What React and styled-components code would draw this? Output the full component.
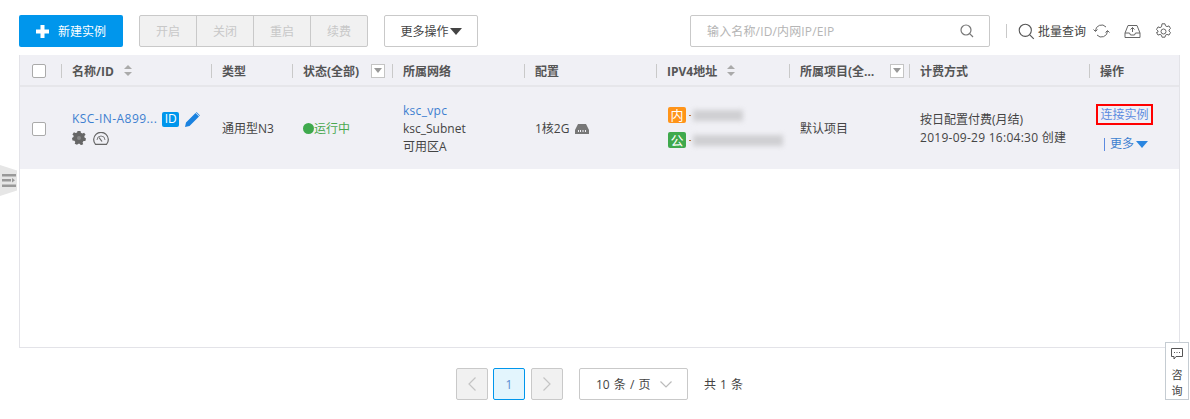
import React from "react";
import styled, { createGlobalStyle } from "styled-components";

const Global = createGlobalStyle`
  html, body { margin: 0; padding: 0; background: #fff; }
  body { font-family: "Open Sans", "Noto Sans CJK SC", sans-serif; font-size: 12px; color: #444; }
  * { box-sizing: border-box; }
`;
const Page = styled.div`position: relative; width: 1190px; height: 419px; overflow: hidden; padding: 15px 0 0 19px;`;
const Toolbar = styled.div`display: flex; align-items: center; height: 32px; width: 1160px;`;
const PrimaryButton = styled.button`
  display: flex; align-items: center; justify-content: center; gap: 9px; width: 104px; height: 32px; padding: 0;
  border: 0; border-radius: 2px; background: #0096ec; color: #fff; font: inherit;
`;
const Group = styled.div`display: flex; margin-left: 16px;`;
const GroupButton = styled.button`
  width: 58px; height: 32px; padding: 0; margin-left: ${p => (p.$first ? 0 : "-1px")}; border: 1px solid #c9c9c9; background: #f1f1f1;
  color: #c8c8c8; font: inherit; border-radius: ${p => (p.$first ? "2px 0 0 2px" : p.$last ? "0 2px 2px 0" : 0)};
`;
const MoreButton = styled.button`
  display: flex; align-items: center; justify-content: center; gap: 1px; width: 94px; height: 32px; margin-left: 16px; padding: 0;
  border: 1px solid #c9c9c9; border-radius: 2px; background: #fff; color: #444; font: inherit;
`;
const Search = styled.div`
  display: flex; align-items: center; justify-content: space-between; width: 300px; height: 32px; margin-left: auto; padding: 0 15px 0 16px;
  border: 1px solid #c9c9c9; border-radius: 2px; color: #b5b5b5; letter-spacing: .15px;
`;
const Divider = styled.span`width: 1px; height: 14px; margin: 0 11px 0 16px; background: #c9c9c9;`;
const Batch = styled.div`display: flex; align-items: center; gap: 3px; color: #444;`;
const ToolIcons = styled.div`display: flex; align-items: center; gap: 14px; margin: 0 7px 0 7px;`;
const Table = styled.div`width: 1161px; height: 293px; margin-top: 8px; border: 1px solid #e3e3e8; border-top: 0;`;
const columns = "42px 150px 81px 100px 132px 132px 133px 120px 180px 89px";
const Header = styled.div`display: grid; grid-template-columns: ${columns}; height: 32px; padding-top: 1px; align-items: center; background: #f0f0f5; border-bottom: 2px solid #e6e6ea; font-weight: 700; color: #555;`;
const HeadCell = styled.div`
  display: flex; align-items: center; justify-content: space-between; height: 14px; margin-left: -1px; padding: 0 ${p => p.$right ?? 10}px 0 10px;
  border-left: 1px solid #c9c9c9;
`;
const HeadText = styled.span`display: flex; align-items: center; gap: 10px; white-space: nowrap;`;
const CheckCell = styled.div`display: flex; padding-left: 12px;`;
const Checkbox = styled.span`display: block; width: 14px; height: 14px; background: #fff; border: 1px solid #aaa; border-radius: 2px;`;
const FilterBox = styled.span`display: flex; align-items: center; justify-content: center; width: 14px; height: 14px; background: #fff; border: 1px solid #c4c4c4;`;
const Row = styled.div`display: grid; grid-template-columns: ${columns}; height: 82px; padding-top: 1px; align-items: center; background: #f0f0f5; color: #444;`;
const Cell = styled.div`padding-left: ${p => p.$pad ?? 10}px; margin-top: ${p => p.$top ?? 0}px; line-height: 18px; white-space: nowrap;`;
const Link = styled.span`color: #3d7fd0; letter-spacing: ${p => p.$track ?? 0}px;`;
const NameLine = styled.div`display: flex; align-items: center; height: 18px;`;
const IdTag = styled.span`display: flex; align-items: center; justify-content: center; width: 17px; height: 15px; margin: 0 6px 0 5px; border-radius: 2px; background: #0096ec; color: #fff; font-size: 12px;`;
const NameIcons = styled.div`display: flex; align-items: center; gap: 7px; margin-top: 3px;`;
const Status = styled.div`display: flex; align-items: center; color: #4aa84f;`;
const Dot = styled.span`width: 11px; height: 11px; border-radius: 50%; background: #3fa94d;`;
const Config = styled.div`display: flex; align-items: center; gap: 6px;`;
const IpList = styled.div`display: flex; flex-direction: column; gap: 9px;`;
const IpLine = styled.div`display: flex; align-items: center;`;
const IpTag = styled.span`display: flex; align-items: center; justify-content: center; width: 18px; height: 16px; border-radius: 2px; color: #fff; font-size: 13px; background: ${p => p.$bg};`;
const IpTick = styled.span`width: 2px; height: 1px; margin: 0 2px 0 3px; background: #b5652c;`;
const Blurred = styled.span`display: block; height: 11px; width: ${p => p.$w}px; background: #cfcfd2; filter: blur(2.5px);`;
const DateLine = styled.div`letter-spacing: .27px;`;
const Ops = styled.div`display: flex; flex-direction: column; align-items: flex-start; padding-left: 5px;`;
const ConnectLink = styled.span`width: 57px; height: 21px; text-align: center; line-height: 17px; border: 2px solid #f00; color: #5c8be0;`;
const OpMore = styled.div`display: flex; align-items: center; gap: 2px; margin: 10px 0 0 8px; color: #3d7fd0;`;
const OpBar = styled.span`width: 1px; height: 13px; margin-right: 3px; background: #5c8be0;`;
const Pager = styled.div`display: flex; align-items: center; height: 32px; margin-top: 20px; padding-left: 437px;`;
const PageBtn = styled.span`
  display: flex; align-items: center; justify-content: center; width: 32px; height: 32px; margin-right: ${p => p.$mr ?? 5}px; border-radius: 2px;
  border: 1px solid ${p => (p.$active ? "#0096ec" : "#c9c9c9")}; background: ${p => (p.$active ? "#e3f5fd" : "#f1f1f1")}; color: #5b8bd0;
`;
const PageSize = styled.div`
  display: flex; align-items: center; justify-content: space-between; width: 109px; height: 32px; margin: 0 16px 0 11px; padding: 0 15px 0 16px;
  border: 1px solid #c9c9c9; border-radius: 2px; word-spacing: 1px;
`;
const Total = styled.span`word-spacing: 1px;`;
const Consult = styled.div`
  position: absolute; left: 1165px; top: 342px; width: 24px; height: 58px; padding-top: 5px; background: #fff; border: 1px solid #c5ccd2;
  display: flex; flex-direction: column; align-items: center; font-size: 11px; line-height: 16px; color: #444;
`;
const ConsultText = styled.span`margin-top: 7px; width: 12px; text-align: center;`;
const Collapse = styled.div`
  position: absolute; left: 0; top: 165px; width: 17px; height: 31px; display: flex; align-items: center; justify-content: center;
  background: #e6e6e6; clip-path: polygon(0 0, 100% 18%, 100% 82%, 0 100%);
`;

const Caret = ({ c = "#444", w = 12, h = 7 }) => (
  <svg width={w} height={h} viewBox="0 0 12 7"><path d="M0 0h12L6 7z" fill={c} /></svg>
);
const Sort = () => (
  <svg width="8" height="11" viewBox="0 0 8 11"><path d="M4 0l4 4H0zM4 11L0 7h8z" fill="#aaa" /></svg>
);
const Filter = () => <FilterBox><svg width="8" height="5" viewBox="0 0 8 5"><path d="M0 0h8L4 5z" fill="#999" /></svg></FilterBox>;
const Mag = ({ s = 14, c = "#777", sw = 1.2 }) => (
  <svg width={s} height={s} viewBox="0 0 14 14" fill="none" stroke={c} strokeWidth={sw}><circle cx="6" cy="6" r="5" /><path d="M9.7 9.7L13 13" /></svg>
);
const Plus = () => <svg width="13" height="13" viewBox="0 0 13 13"><path d="M4.5 0h4v4.5H13v4H8.500V13h-4V8.500H0v-4h4.500z" fill="#fff" /></svg>;
const Refresh = () => (
  <svg width="17" height="16" viewBox="0 0 17 16" fill="none" stroke="#666" strokeWidth="1"><path d="M2.500 8a6 6 0 0 1 10.500-4" /><path d="M14.500 8a6 6 0 0 1-10.500 4" /><path d="M0.500 6.500l2 2 2-2M12.500 9.500l2-2 2 2" /></svg>
);
const Cloud = () => (
  <svg width="17" height="15" viewBox="0 0 17 15" fill="none" stroke="#666" strokeWidth="1"><path d="M1 9l3-7.500h9L16 9v4.500H1zM1 9h4.500l1 2h4l1-2H16" /><path d="M8.500 8V3.500M6.500 5.500l2-2 2 2" /></svg>
);
const Gear = () => (
  <svg width="17" height="17" viewBox="0 0 17 17" fill="none" stroke="#666" strokeWidth="1"><circle cx="8.500" cy="8.500" r="2.500" /><path d="M7 .8h3l.5 2 1.500.8 2-.7 1.500 2.600-1.500 1.400v1.200l1.500 1.400-1.500 2.600-2-.7-1.500.8-.5 2H7l-.5-2-1.500-.8-2 .7-1.500-2.600L3 9.100V7.900L1.500 6.500 3 3.900l2 .7 1.500-.8z" /></svg>
);
const Pencil = () => <svg width="15" height="15" viewBox="0 0 15 15"><path d="M0 15l1-4.500L10.500 1l3.500 3.500L4.500 14zM11.500 0l3.500 3.500-.5.500L11 .5z" fill="#1a82e0" /></svg>;
const SolidGear = () => (
  <svg width="14" height="14" viewBox="0 0 14 14"><path d="M5.500 0h3l.4 1.800 1.500.7 1.700-.8 1.500 2.100-1.300 1.300.2 1.400 1.500.9-.6 2.500-1.900.2-.9 1.300.6 1.800-2.300 1-1.200-1.400H6.300L5 13.800l-2.300-1 .6-1.800-.9-1.300-1.900-.2L0 7l1.500-.9.200-1.400L.4 3.400l1.500-2.100 1.700.8 1.500-.7z" fill="#666" /><circle cx="7" cy="7" r="2" fill="#888" /></svg>
);
const GaugeIcon = () => (
  <svg width="16" height="13" viewBox="0 0 16 13" fill="none" stroke="#666" strokeWidth="1.200"><path d="M2.500 12.400A7.300 7.300 0 1 1 13.500 12.400z" /><path d="M4 8a4 4 0 0 1 8 0" strokeWidth=".8" /><path d="M6 5.500l3 4" /></svg>
);
const Nic = () => <svg width="14" height="11" viewBox="0 0 14 11"><path d="M3 0h8l3 6v4H0V6z" fill="#777" /><path d="M3 6h1v2H3zM5 6h1v2H5zM7.500 6h1v2h-1zM10 6h1v2h-1z" fill="#f0f0f5" /></svg>;
const Chevron = ({ d = "down", c = "#bbb" }) => (
  <svg width={d === "down" ? 12 : 8} height={d === "down" ? 7 : 14} viewBox={d === "down" ? "0 0 12 7" : "0 0 8 14"} fill="none" stroke={c} strokeWidth="1.200">
    <path d={d === "down" ? "M.5.500L6 6 11.500.500" : d === "left" ? "M7.500.500L1 7l6.500 6.500" : "M.5.500L7 7 .5 13.500"} />
  </svg>
);
const Chat = () => <svg width="12" height="12" viewBox="0 0 12 12" fill="none" stroke="#555"><path d="M.5.500h11v8H5l-2 2.500V8.500H.5z" /><path d="M3 4.500h6" strokeDasharray="1 1.500" /></svg>;
const CollapseIcon = () => <svg width="14" height="13" viewBox="0 0 14 13"><path d="M0 0h14v2.500H0zM0 5h9v2.500H0zM10 4l3 2.300-3 2.300zM0 10.500h14V13H0z" fill="#999" /></svg>;

export default function App() {
  return (
    <Page>
      <Global />
      <Toolbar>
        <PrimaryButton><Plus />新建实例</PrimaryButton>
        <Group>
          <GroupButton $first>开启</GroupButton>
          <GroupButton>关闭</GroupButton>
          <GroupButton>重启</GroupButton>
          <GroupButton $last>续费</GroupButton>
        </Group>
        <MoreButton>更多操作<Caret /></MoreButton>
        <Search>输入名称/ID/内网IP/EIP<Mag /></Search>
        <Divider />
        <Batch><Mag s={17} c="#555" sw={0.9} />批量查询</Batch>
        <ToolIcons><Refresh /><Cloud /><Gear /></ToolIcons>
      </Toolbar>
      <Table>
        <Header>
          <CheckCell><Checkbox /></CheckCell>
          <HeadCell><HeadText>名称/ID<Sort /></HeadText></HeadCell>
          <HeadCell><HeadText>类型</HeadText></HeadCell>
          <HeadCell $right={8}><HeadText>状态(全部)</HeadText><Filter /></HeadCell>
          <HeadCell><HeadText>所属网络</HeadText></HeadCell>
          <HeadCell><HeadText>配置</HeadText></HeadCell>
          <HeadCell><HeadText>IPV4地址<Sort /></HeadText></HeadCell>
          <HeadCell $right={6}><HeadText>所属项目(全…</HeadText><Filter /></HeadCell>
          <HeadCell><HeadText>计费方式</HeadText></HeadCell>
          <HeadCell><HeadText>操作</HeadText></HeadCell>
        </Header>
        <Row>
          <CheckCell><Checkbox /></CheckCell>
          <Cell $top={-2}>
            <NameLine><Link $track={0.43}>KSC-IN-A899...</Link><IdTag>ID</IdTag><Pencil /></NameLine>
            <NameIcons><SolidGear /><GaugeIcon /></NameIcons>
          </Cell>
          <Cell>通用型N3</Cell>
          <Cell><Status><Dot />运行中</Status></Cell>
          <Cell><div><Link $track={0.3}>ksc_vpc</Link></div><div>ksc_Subnet</div><div>可用区A</div></Cell>
          <Cell $top={1}><Config>1核2G<Nic /></Config></Cell>
          <Cell $pad={11} $top={-2}>
            <IpList>
              <IpLine><IpTag $bg="#ff9419">内</IpTag><IpTick /><Blurred $w={50} /></IpLine>
              <IpLine><IpTag $bg="#3fa94d">公</IpTag><IpTick /><Blurred $w={90} /></IpLine>
            </IpList>
          </Cell>
          <Cell>默认项目</Cell>
          <Cell $top={1}><div>按日配置付费(月结)</div><DateLine>2019-09-29 16:04:30 创建</DateLine></Cell>
          <Cell $pad={1}>
            <Ops>
              <ConnectLink>连接实例</ConnectLink>
              <OpMore><OpBar />更多<Caret c="#2b86e0" /></OpMore>
            </Ops>
          </Cell>
        </Row>
      </Table>
      <Pager>
        <PageBtn><Chevron d="left" c="#c4c4c4" /></PageBtn>
        <PageBtn $active $mr={6}>1</PageBtn>
        <PageBtn $mr={5}><Chevron d="right" c="#c4c4c4" /></PageBtn>
        <PageSize>10 条 / 页<Chevron /></PageSize>
        <Total>共 1 条</Total>
      </Pager>
      <Collapse><CollapseIcon /></Collapse>
      <Consult><Chat /><ConsultText>咨询</ConsultText></Consult>
    </Page>
  );
}
